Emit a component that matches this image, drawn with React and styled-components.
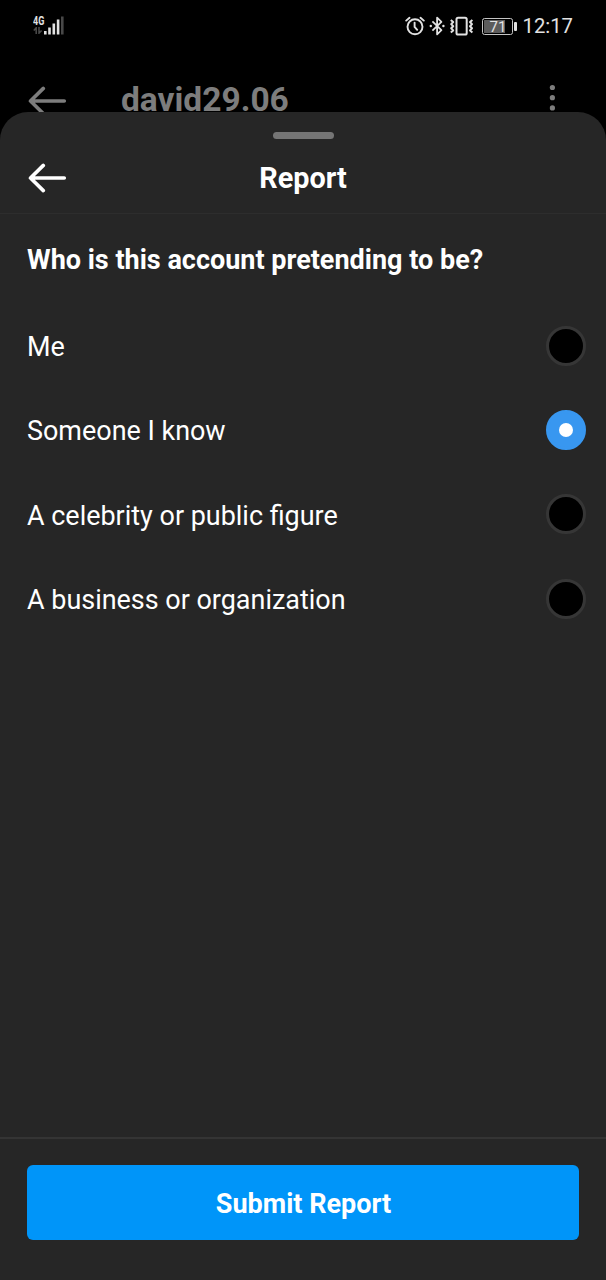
import React, {useState} from 'react';
import styled, {createGlobalStyle} from 'styled-components';

const GlobalStyle = createGlobalStyle`
    * {
        box-sizing: border-box;
    }
    body {
        margin: 0;
        background: #000;
        font-family: Roboto, "Liberation Sans", sans-serif;
    }
`;
const Screen = styled.div`
    width: 606px;
    height: 1280px;
    display: flex;
    flex-direction: column;
    overflow: hidden;
    color: #fff;
    background: #000;
`;
const StatusBar = styled.div`
    height: 52px;
    flex: none;
    display: flex;
    align-items: center;
    justify-content: space-between;
    padding: 0 33px;
    color: #e2e2e2;
`;
const Network = styled.div`
    display: flex;
    align-items: flex-start;
    height: 20px;
    margin-top: -2px;
`;
const NetworkType = styled.div`
    width: 11px;
    display: flex;
    flex-direction: column;
    font-size: 12px;
    font-weight: 700;
    line-height: 12px;
    white-space: nowrap;
`;
const NetworkLabel = styled.span`
    width: 16px;
    transform: scaleX(0.75);
    transform-origin: left;
`;
const StatusIcons = styled.div`
    display: flex;
    align-items: center;
`;
const IconGroup = styled.div`
    display: flex;
    gap: 4px;
`;
const Battery = styled.div`
    width: 31px;
    height: 17px;
    margin-left: 8px;
    border: 1px solid #c4c4c4;
    border-radius: 2.5px;
    text-align: center;
    font-size: 15px;
    line-height: 16px;
    background: linear-gradient(to right, #5c5c5c ${({level}) => level}%, #000 ${({level}) => level}%);
    box-shadow: inset 0 0 0 1px #000;
`;
const BatteryTip = styled.div`
    width: 2.5px;
    height: 9px;
    margin-left: 1px;
    border-radius: 1px;
    background: #e2e2e2;
`;
const Clock = styled.span`
    margin-left: 5.5px;
    font-size: 20.3px;
    line-height: 24px;
`;
const ProfileBar = styled.div`
    height: 60px;
    flex: none;
    display: flex;
    align-items: flex-start;
    overflow: hidden;
    padding: 28px 48px 0 28px;
    color: #7d7d7d;

    > svg:first-child {
        margin-top: 6px;
    }
`;
const Username = styled.div`
    flex: 1;
    padding-left: 53px;
    font-size: 33.5px;
    font-weight: 700;
    line-height: 32px;
    margin-top: 4px;
`;
const Sheet = styled.div`
    flex: 1;
    display: flex;
    flex-direction: column;
    border-radius: 28px 28px 0 0;
    background: #262626;
`;
const Handle = styled.div`
    width: 61px;
    height: 7px;
    flex: none;
    margin: 20px auto 3px;
    border-radius: 4px;
    background: #757575;
`;
const SheetHeader = styled.div`
    height: 72px;
    flex: none;
    display: grid;
    grid-template-columns: 40px 1fr 40px;
    align-items: center;
    padding: 0 28px;
    border-bottom: 1px solid #2d2d2d;
`;
const BackButton = styled.button`
    display: flex;
    padding: 0;
    border: 0;
    color: inherit;
    background: none;
    cursor: pointer;
`;
const Title = styled.div`
    padding-top: 1px;
    text-align: center;
    font-size: 28.8px;
    font-weight: 700;
`;
const Question = styled.div`
    height: 90px;
    flex: none;
    padding: 0 27px;
    font-size: 27px;
    font-weight: 700;
    line-height: 92px;
`;
const Options = styled.div`
    flex: 1;
`;
const Option = styled.div`
    height: 84.2px;
    display: flex;
    align-items: center;
    justify-content: space-between;
    padding: 0 20px 0 27px;
    cursor: pointer;
`;
const OptionLabel = styled.span`
    padding-top: 2.4px;
    font-size: 26.95px;
    line-height: 32px;
`;
const Radio = styled.div`
    width: 40px;
    height: 40px;
    display: flex;
    align-items: center;
    justify-content: center;
    border: 3px solid ${({checked}) => (checked ? '#3897f0' : '#363636')};
    border-radius: 50%;
    background: ${({checked}) => (checked ? '#3897f0' : '#000')};
`;
const RadioDot = styled.div`
    width: 14px;
    height: 14px;
    border-radius: 50%;
    background: #fff;
`;
const Footer = styled.div`
    flex: none;
    padding: 26px 27px 40px;
    border-top: 2px solid #343434;
`;
const SubmitButton = styled.button`
    width: 100%;
    height: 75px;
    display: block;
    padding: 3px 0 0 1px;
    border: 0;
    border-radius: 6px;
    color: #fff;
    background: #0095f9;
    font-family: inherit;
    font-size: 27px;
    font-weight: 700;
    cursor: pointer;
`;

const BackArrow = () => (
    <svg width="40" height="30" viewBox="0 0 40 30" fill="none" stroke="currentColor" strokeWidth="3.6" strokeLinecap="round" strokeLinejoin="round">
        <path d="M15.3 2.4 2.5 15 15.3 27.6M2.5 15H36.3" />
    </svg>
);

const SignalIcon = () => (
    <svg width="20" height="20" viewBox="0 0 20 20" fill="currentColor">
        <rect x="0" y="16" width="2.6" height="3.5" />
        <rect x="4.2" y="12.5" width="2.6" height="7" />
        <rect x="8.5" y="8.5" width="2.6" height="11" />
        <rect x="12.8" y="4.5" width="2.6" height="15" />
        <rect x="17" y="1.5" width="2.6" height="18" fill="#484848" />
    </svg>
);

const DataArrows = () => (
    <svg width="10" height="7" viewBox="0 0 10 7" fill="none" stroke="#4c4c4c" strokeWidth="1.5">
        <path d="M3.2 7V.8L.8 3.6M6 0v6.2l2.6-2.8" />
    </svg>
);

const AlarmIcon = () => (
    <svg width="20" height="20" viewBox="0 0 20 20" fill="none" stroke="currentColor" strokeWidth="1.9" strokeLinecap="round">
        <circle cx="10" cy="10.8" r="7.5" />
        <path d="M9.6 6.6v4.2l2.6 3M1.2 4.6 4.5 1.8M18.8 4.6l-3.3-2.8" />
    </svg>
);

const BluetoothIcon = () => (
    <svg width="16" height="20" viewBox="0 0 16 20" fill="none" stroke="currentColor" strokeWidth="1.8" strokeLinejoin="round">
        <path d="m3.4 5.4 9 8.8-4.3 4.1V1.7l4.3 4.1-9 8.8" />
        <circle cx="1.8" cy="10" r="1.2" fill="currentColor" stroke="none" />
        <circle cx="14.4" cy="10" r="1.2" fill="currentColor" stroke="none" />
    </svg>
);

const VibrateIcon = () => (
    <svg width="25" height="20" viewBox="0 0 25 20" fill="none" stroke="currentColor" strokeWidth="2" strokeLinejoin="round">
        <rect x="7.5" y="1.7" width="10.2" height="16.8" rx="1.6" />
        <path d="m1.8 4 2.4 2-2 2.1 2 2.1-2 2.1 2 2.1-2.4 2M23.4 4 21 6l2 2.1-2 2.1 2 2.1-2 2.1 2.4 2" />
    </svg>
);

const MoreIcon = () => (
    <svg width="12" height="34" viewBox="0 0 12 34" fill="currentColor">
        <circle cx="6.4" cy="7.5" r="2.6" />
        <circle cx="6.4" cy="17.7" r="2.6" />
        <circle cx="6.4" cy="27.9" r="2.6" />
    </svg>
);

const options = [
    {id: 'me', label: 'Me'},
    {id: 'known', label: 'Someone I know'},
    {id: 'celebrity', label: 'A celebrity or public figure'},
    {id: 'business', label: 'A business or organization'},
];

const App = () => {
    const [selected, setSelected] = useState('known');

    return (
        <Screen>
            <GlobalStyle />
            <StatusBar>
                <Network>
                    <NetworkType>
                        <NetworkLabel>4G</NetworkLabel>
                        <DataArrows />
                    </NetworkType>
                    <SignalIcon />
                </Network>
                <StatusIcons>
                    <IconGroup>
                        <AlarmIcon />
                        <BluetoothIcon />
                        <VibrateIcon />
                    </IconGroup>
                    <Battery level={75}>71</Battery>
                    <BatteryTip />
                    <Clock>12:17</Clock>
                </StatusIcons>
            </StatusBar>
            <ProfileBar>
                <BackArrow />
                <Username>david29.06</Username>
                <MoreIcon />
            </ProfileBar>
            <Sheet>
                <Handle />
                <SheetHeader>
                    <BackButton aria-label="Back">
                        <BackArrow />
                    </BackButton>
                    <Title>Report</Title>
                </SheetHeader>
                <Question>Who is this account pretending to be?</Question>
                <Options>
                    {options.map(({id, label}) => {
                        return (
                            <Option key={id} onClick={() => setSelected(id)}>
                                <OptionLabel>{label}</OptionLabel>
                                <Radio checked={id === selected}>
                                    {id === selected && <RadioDot />}
                                </Radio>
                            </Option>
                        );
                    })}
                </Options>
                <Footer>
                    <SubmitButton>Submit Report</SubmitButton>
                </Footer>
            </Sheet>
        </Screen>
    )
};


export default App;
